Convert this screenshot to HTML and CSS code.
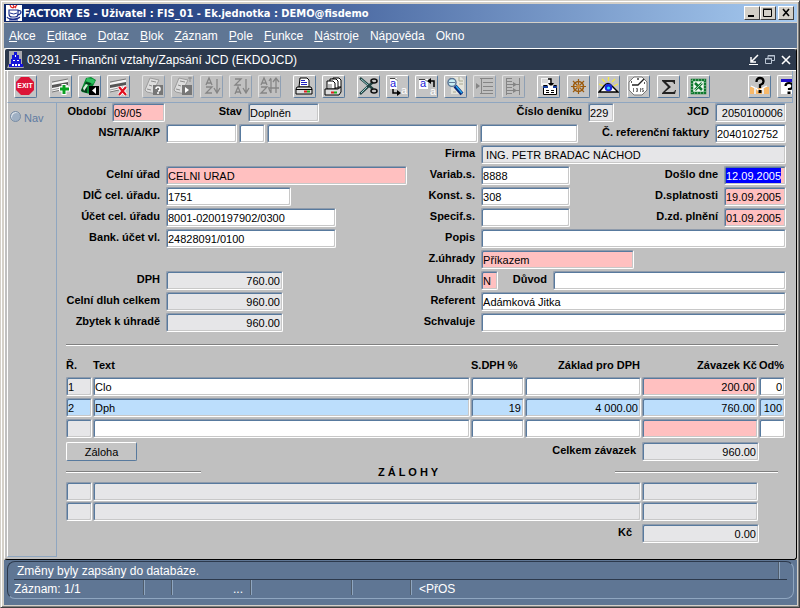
FILE: index.html
```html
<!DOCTYPE html>
<html lang="cs">
<head>
  <meta charset="UTF-8" />
  <meta name="viewport" content="width=device-width, initial-scale=1.0" />
  <title>FACTORY ES</title>
  <link rel="stylesheet" href="styles.css">
</head>
<body>
<div class="window">
  <header class="titlebar">
    <svg class="app-icon" viewBox="0 0 16 16" aria-hidden="true">
      <rect width="16" height="16" fill="#fff"/>
      <path d="M4 0l1 2 2 1M7 0l1 2-1 1M11 0l-2 2 1 1" fill="none" stroke="#e02020" stroke-width="1.200"/>
      <path d="M3 5h9v4q0 3-3 3H6q-3 0-3-3zM12 6q3-1 3 1t-3 3M1 12q1 2 6 2t7-2M3 15h9" fill="none" stroke="#1c2f8c" stroke-width="1.200"/>
      <path d="M4 8q4 2 7 0" fill="none" stroke="#1c2f8c"/>
    </svg>
    <h1>FACTORY ES - Uživatel : FIS_01 - Ek.jednotka : DEMO@fisdemo</h1>
    <div class="win-buttons">
      <button type="button" aria-label="Minimalizovat"><svg viewBox="0 0 14 12"><path d="M3 9h6" stroke="#000" stroke-width="2"/></svg></button>
      <button type="button" aria-label="Maximalizovat"><svg viewBox="0 0 14 12"><path d="M2.500 2.500h8v7h-8zM2 2h9" fill="none" stroke="#000"/></svg></button>
      <button type="button" class="close" aria-label="Zavřít"><svg viewBox="0 0 14 12"><path d="M4 2l6 7M10 2l-6 7" stroke="#000" stroke-width="1.600"/></svg></button>
    </div>
  </header>

  <nav class="menu">
    <a href="#"><u>A</u>kce</a>
    <a href="#"><u>E</u>ditace</a>
    <a href="#"><u>D</u>otaz</a>
    <a href="#"><u>B</u>lok</a>
    <a href="#"><u>Z</u>áznam</a>
    <a href="#"><u>P</u>ole</a>
    <a href="#"><u>F</u>unkce</a>
    <a href="#"><u>N</u>ástroje</a>
    <a href="#">Náp<u>o</u>věda</a>
    <a href="#">Okno</a>
  </nav>

  <div class="child">
    <div class="child-title">
      <svg class="child-icon" viewBox="0 0 18 18" aria-hidden="true">
        <path d="M2 0h13v13l2 4H0l2-4z" fill="#a9a9b0"/>
        <path d="M7 1h3v3h2v4h2v5h2v3H2v-3h2V8h1V4h2z" fill="#1414d8"/>
        <path d="M8 4h1v2H8zM6 9h2v1H6zM10 9h2v1h-2zM5 13h2v2H5zM8 13h2v2H8zM11 13h2v2h-2z" fill="#fff"/>
      </svg>
      <h2>03291 - Finanční vztahy/Zapsání JCD (EKDOJCD)</h2>
      <div class="child-buttons">
        <button type="button" aria-label="Minimalizovat okno"><svg viewBox="0 0 12 12"><path d="M10 1L4 7M3 3v5h5" fill="none" stroke="#fff" stroke-width="1.500"/><path d="M1 10.500h9" stroke="#fff"/></svg></button>
        <button type="button" aria-label="Obnovit okno"><svg viewBox="0 0 12 12"><path d="M4 4V1.500h6.500v5H8M1.500 4.500h6v5h-6z" fill="none" stroke="#b9c4d2"/><path d="M4 2h7M1 5h7" stroke="#b9c4d2"/></svg></button>
        <button type="button" aria-label="Zavřít okno"><svg viewBox="0 0 12 12"><path d="M2 2l8 8M10 2l-8 8" stroke="#fff" stroke-width="1.600"/></svg></button>
      </div>
    </div>

    <div class="toolbar">
      <button type="button" aria-label="Konec"><svg viewBox="0 0 21 21"><path d="M6 1h8l5 5v8l-5 5H6l-5-5V6z" fill="#dc1438"/><text class="exit" x="10" y="12" text-anchor="middle">EXIT</text></svg></button>

      <div class="group">
        <button type="button" aria-label="Nový záznam"><svg viewBox="0 0 21 21"><path d="M2 7l16-4v9L2 16z" fill="#f4f4f4"/><path d="M2 6l16-3M2 16l9-2" stroke="#777"/><path d="M2 9l16-3v3L2 12z" fill="#555"/><path d="M2 14l13-3" stroke="#999"/><path d="M14 8v11M9 13h11" stroke="#fff" stroke-width="5"/><path d="M14 9v9M10 13h9" stroke="#08a020" stroke-width="3"/></svg></button>
        <button type="button" aria-label="Uložit"><svg viewBox="0 0 21 21"><path d="M2 14L7 2l5-1 5 3-3 6-3 8-8-2z" fill="#0a8a32"/><path d="M8 2l6 1 2 2-2 3-7-3z" fill="#30c060"/><path d="M2 15l2-4 4-2v8M7 6l5 1-1 2-5-1z" fill="#053c18"/><path d="M4 12l3-4 2 1-4 6z" fill="#d8f0dc"/><path d="M10 10h10v9H10z"/><path d="M17 11v7l-4-3.500z" fill="#fff"/></svg></button>
        <button type="button" aria-label="Smazat záznam"><svg viewBox="0 0 21 21"><path d="M2 7l16-4v9L2 16z" fill="#f4f4f4"/><path d="M2 6l16-3M2 16l9-2" stroke="#777"/><path d="M2 9l16-3v3L2 12z" fill="#555"/><path d="M2 14l13-3" stroke="#999"/><path d="M11 11l7 8M18 11l-7 8" stroke="#fff" stroke-width="4"/><path d="M11 11l7 8M18 11l-7 8" stroke="#e01020" stroke-width="2.200"/></svg></button>
      </div>

      <div class="group">
        <button type="button" class="off" disabled aria-label="Zadat dotaz"><svg viewBox="0 0 21 21"><path d="M2 14L7 2l9 2-3 6v8l-9-2z" fill="#ddd" stroke="#9c9c9c"/><path d="M8 5l5 1M6 9l3 1M4 13l4 1" stroke="#8c8c8c"/><path d="M10 9h10v10H10z" fill="#777"/><path d="M13 13q0-2 2-2t2 2-2 2m0 1v2" fill="none" stroke="#fff" stroke-width="1.500"/></svg></button>
        <button type="button" class="off" disabled aria-label="Provést dotaz"><svg viewBox="0 0 21 21"><path d="M2 14L7 2l9 2-3 6v8l-9-2z" fill="#ddd" stroke="#9c9c9c"/><path d="M8 5l5 1M6 9l3 1M4 13l4 1M16 2h4M18 1v5" stroke="#8c8c8c"/><path d="M10 9h10v10H10z" fill="#777"/><path d="M13 11v6l4-3z" fill="#fff"/></svg></button>
        <button type="button" class="off" disabled aria-label="Řadit vzestupně"><svg viewBox="0 0 21 21"><path d="M5 9l3-7 3 7M6 7h4M5 11h6l-6 6h6M16 3v13M13 12l3 5 3-5" fill="none" stroke="#858585" stroke-width="1.300"/></svg></button>
        <button type="button" class="off" disabled aria-label="Řadit sestupně"><svg viewBox="0 0 21 21"><path d="M5 3h6l-6 6h6M5 18l3-7 3 7M6 16h4M16 3v13M13 12l3 5 3-5" fill="none" stroke="#858585" stroke-width="1.300"/></svg></button>
        <button type="button" class="off" disabled aria-label="Řadit"><svg viewBox="0 0 21 21"><path d="M2 9l3-7 3 7M3 7h4M2 11h6l-6 6h6M12 17V3M10 13l2 4M17 3v14M10 5l2-3M14 6l3-4 3 4M9 12h11" fill="none" stroke="#858585" stroke-width="1.300"/></svg></button>
      </div>

      <div class="group">
        <button type="button" aria-label="Tisk"><svg viewBox="0 0 21 21"><path d="M6 2h7l2 2v7H5z" fill="#fff" stroke="#000"/><path d="M7 4.500h4M7 6.500h6M7 8.500h6" stroke="#2020c0"/><path d="M3 11h14l1 2v5H2v-5z" fill="#ddd" stroke="#000"/><path d="M2 13.500h16" stroke="#000"/><path d="M10 15.500h3" stroke="#e02020" stroke-width="2"/><path d="M13 15.500h3" stroke="#20b020" stroke-width="2"/></svg></button>
        <button type="button" aria-label="Tisk sestav"><svg viewBox="0 0 21 21"><path d="M10 2h6l2 2v7h-8z" fill="#fff" stroke="#000"/><path d="M7 3h6l2 2v7H7z" fill="#fff" stroke="#000"/><path d="M4 5h6l2 2v6H4z" fill="#fff" stroke="#000"/><path d="M5 9h4M5 11h4" stroke="#777"/><path d="M2 13h13l3-2v5l-2 3H2z" fill="#ddd" stroke="#000"/><path d="M8 16.500h3" stroke="#e02020" stroke-width="2"/><path d="M11 16.500h3" stroke="#20b020" stroke-width="2"/></svg></button>
      </div>

      <div class="group">
        <button type="button" aria-label="Vyjmout"><svg viewBox="0 0 21 21"><path d="M2 2l13 11M2 18L15 6" stroke="#244" stroke-width="2.400"/><path d="M3 3l7 6M3 17l6-6" stroke="#9cc"/><ellipse cx="16" cy="5" rx="3" ry="2" fill="none" stroke="#111" stroke-width="1.600"/><ellipse cx="16" cy="15" rx="3" ry="2" fill="none" stroke="#111" stroke-width="1.600"/></svg></button>
        <button type="button" aria-label="Kopírovat"><svg viewBox="0 0 21 21"><path d="M3 2h7v11H3z" fill="#fff"/><path d="M3 2.500h5l2 2" fill="none" stroke="#444"/><text class="copy" x="3" y="11" fill="#2020d8">a</text><path d="M6 13v4h5" fill="none" stroke="#000" stroke-width="1.500"/><path d="M10 14l4 3-4 3z"/><text class="copy" x="14" y="18" fill="#fff">a</text></svg></button>
        <button type="button" aria-label="Vložit"><svg viewBox="0 0 21 21"><path d="M3 3h9v10H3z" fill="#fff"/><path d="M3 3.500h6l2 2" fill="none" stroke="#444"/><text class="copy" x="4" y="11" fill="#2020d8">a</text><path d="M13 5h5v6" fill="none" stroke="#000" stroke-width="1.500"/><path d="M15 2l-4 3 4 3z"/><text class="copy" x="14" y="19" fill="#fff">a</text></svg></button>
        <button type="button" aria-label="Hledat"><svg viewBox="0 0 21 21"><path d="M6 1h10l3 3v14H6z" fill="#e4e4dc"/><path d="M14 1v4h4M14 8h4M8 16h3" fill="none" stroke="#a8a890"/><circle cx="7" cy="6.500" r="4" fill="#c8eef4" stroke="#5d7897" stroke-width="1.500"/><path d="M4 6.500h6" stroke="#5d7897"/><path d="M10 10l7 8" stroke="#082878" stroke-width="4"/><path d="M11 10l6 7" stroke="#28a8f0" stroke-width="1.500"/></svg></button>
        <button type="button" class="off" disabled aria-label="Seznam"><svg viewBox="0 0 21 21"><path d="M6 2.500h13M9 6.500h10M9 10.500h10M9 14.500h10M6 17.500h13M7.500 2v16" stroke="#858585"/><path d="M2 7l4 3-4 3z" fill="#858585"/></svg></button>
        <button type="button" class="off" disabled aria-label="Strom"><svg viewBox="0 0 21 21"><path d="M3.500 2v17M3 2.500h6M3 5.500h6M3 8.500h6M3 11.500h6M3 14.500h6M3 17.500h6M16.500 2v17M9 8.500h7M9 14.500h7" stroke="#858585"/><path d="M10 6l4 2.500-4 2.500zM10 12l4 2.500-4 2.500z" fill="#858585"/></svg></button>
      </div>

      <div class="group wide">
        <button type="button" aria-label="Formulář"><svg viewBox="0 0 21 21"><path d="M3 2h9v8H3z" fill="#f4f4f4"/><path d="M4 4h6M4 6h6" stroke="#bbb"/><path d="M10 3h3v5" fill="none" stroke="#000" stroke-width="1.400"/><path d="M10 7h6l-3 4z"/><path d="M5.500 9.500v9h13v-9h-3M5.500 9.500h4" fill="#fff" stroke="#000"/><path d="M5 10h5v2H5zM15 10h4v2h-4z" fill="#123c9c"/><path d="M8 14.500h3M8 16.500h3M13 14.500h3M13 16.500h3" stroke="#000"/></svg></button>
        <button type="button" aria-label="Navigace"><svg viewBox="0 0 21 21"><circle cx="10.500" cy="10.500" r="5" fill="none" stroke="#9c5c10" stroke-width="1.600"/><path d="M10.500 3v15M3 10.500h15M5 5l11 11M16 5L5 16" stroke="#9c5c10" stroke-width="1.200"/><circle cx="10.500" cy="10.500" r="2" fill="#c88838"/></svg></button>
        <button type="button" aria-label="Zobrazit"><svg viewBox="0 0 21 21"><path d="M10.500 1v4M4 3l3 3M17 3l-3 3M1 8l4 2M20 8l-4 2" stroke="#f4e840" stroke-width="1.300"/><path d="M1 16q3-3 5-6 4-5 8 0 3 3 6 6z" fill="#fff" stroke="#000" stroke-width="1.400"/><circle cx="10.500" cy="11.500" r="3.800" fill="#1828e0"/><circle cx="10.500" cy="12" r="1.600" fill="#30d8f8"/></svg></button>
        <button type="button" aria-label="Hodiny"><svg viewBox="0 0 21 21"><path d="M6 1h8l5 5v8l-5 5H6l-5-5V6z" fill="#fff" stroke="#777"/><path d="M4 9h6l6-6M3 6h1M10 2v2M17 7h-1" fill="none" stroke="#222" stroke-width="1.300"/><path d="M5.500 12v4M8 12.500h1.500v3H8M9.500 14H8M12.500 12v4M15.500 12.500h-1.500v1.500h1.500v1.500h-1.500" fill="none" stroke="#555" stroke-width="0.800"/></svg></button>
        <button type="button" aria-label="Součet"><svg viewBox="0 0 21 21"><path d="M4 4h13v4h-1q0-2-2-2H8l5 5-6 5h8q2 0 2-2h1l-1 4H4v-1l6-6-6-6z" fill="#222"/></svg></button>
        <button type="button" aria-label="Excel"><svg viewBox="0 0 21 21"><path d="M4 4h13v13H4z" fill="#f4fcf4" stroke="#107830" stroke-width="2.500"/><path d="M4 4h13v13H4z" fill="none" stroke="#a0d0a8" stroke-dasharray="1 2"/><path d="M7 7l7 7M14 7l-7 7" stroke="#107830" stroke-width="2.500"/><path d="M14 7l-7 7" stroke="#fff" stroke-width="0.700"/></svg></button>
      </div>

      <div class="group last">
        <button type="button" aria-label="Nápověda"><svg viewBox="0 0 21 21"><path d="M1 11h4v7H1zM7 12h6v6H7zM15 11h5v7h-5z" fill="#f8b868"/><path d="M2 10l4 2v6M7 12l3 3 4-3M14 18v-6l4-2" fill="none" stroke="#fff" stroke-width="1.300"/><path d="M7.500 6q0-4 3.500-4t3.500 3.500Q14.500 8 11 9v3" fill="none" stroke="#000" stroke-width="2.300"/><path d="M9.500 14h3v3h-3z"/></svg></button>
        <button type="button" aria-label="O okně"><svg viewBox="0 0 21 21"><path d="M3 3h18v15H3z" fill="#fff"/><path d="M3 3h18v3H3z" fill="#2010c8"/><path d="M7.500 10q0-3 3.500-3t3.500 3-3.500 3v1" fill="none" stroke="#000" stroke-width="2.200"/><path d="M9.500 15.500h3v2.500h-3z"/></svg></button>
      </div>
    </div>

    <div class="work">
      <aside class="sidebar">
        <input type="radio" id="nav" disabled>
        <label for="nav">Nav</label>
      </aside>

      <main>
        <form class="form">
          <div class="row">
            <label class="short" for="obdobi">Období</label>
            <input class="req w-period" id="obdobi" value="09/05">
            <label class="w-state-label" for="stav">Stav</label>
            <input class="ro w-state" id="stav" value="Doplněn" readonly>
            <label class="grow" for="denik">Číslo deníku</label>
            <input class="ro w-small" id="denik" value="229" readonly>
            <label class="w-jcd-label" for="jcd">JCD</label>
            <input class="ro num w-number" id="jcd" value="2050100006" readonly>
          </div>
          <div class="row">
            <label class="left-label" for="ns">NS/TA/A/KP</label>
            <div class="parts">
              <input class="w-number" id="ns">
              <input class="w-small" aria-label="TA">
              <input class="grow" aria-label="A">
              <input class="w-kp" aria-label="KP">
            </div>
            <label class="w-ref-label" for="faktura">Č. referenční faktury</label>
            <input class="w-number" id="faktura" value="2040102752">
          </div>

          <div class="columns">
            <div class="col left">
              <div class="row blank"></div>
              <div class="row"><label for="urad">Celní úřad</label><input class="req grow" id="urad" value="CELNI URAD"></div>
              <div class="row"><label for="dic">DIČ cel. úřadu.</label><input class="w-dic" id="dic" value="1751"></div>
              <div class="row"><label for="ucet">Účet cel. úřadu</label><input class="w-account" id="ucet" value="8001-0200197902/0300"></div>
              <div class="row"><label for="banka">Bank. účet vl.</label><input class="w-account" id="banka" value="24828091/0100"></div>
              <div class="row blank"></div>
              <div class="row"><label for="dph">DPH</label><input class="ro num w-amount" id="dph" value="760.00" readonly></div>
              <div class="row"><label for="dluh">Celní dluh celkem</label><input class="ro num w-amount" id="dluh" value="960.00" readonly></div>
              <div class="row"><label for="zbytek">Zbytek k úhradě</label><input class="ro num w-amount" id="zbytek" value="960.00" readonly></div>
            </div>
            <div class="col right">
              <div class="row"><label for="firma">Firma</label><input class="ro grow" id="firma" value=" ING. PETR BRADAC NÁCHOD" readonly></div>
              <div class="row"><label for="vs">Variab.s.</label><input class="w-symbol" id="vs" value="8888"><label class="grow" for="doslo">Došlo dne</label><span class="req w-date field"><input class="selected" id="doslo" value="12.09.2005"></span></div>
              <div class="row"><label for="ks">Konst. s.</label><input class="w-symbol" id="ks" value="308"><label class="grow" for="splatnost">D.splatnosti</label><input class="req w-date" id="splatnost" value="19.09.2005"></div>
              <div class="row"><label for="ss">Specif.s.</label><input class="w-symbol" id="ss"><label class="grow" for="plneni">D.zd. plnění</label><input class="req w-date" id="plneni" value="01.09.2005"></div>
              <div class="row"><label for="popis">Popis</label><input class="grow" id="popis"></div>
              <div class="row"><label for="zuhrady">Z.úhrady</label><input class="req w-pay" id="zuhrady" value="Příkazem"></div>
              <div class="row"><label for="uhradit">Uhradit</label><input class="req w-flag" id="uhradit" value="N"><label class="w-reason-label" for="duvod">Důvod</label><input class="grow" id="duvod"></div>
              <div class="row"><label for="referent">Referent</label><input class="grow" id="referent" value="Adámková Jitka"></div>
              <div class="row"><label for="schvaluje">Schvaluje</label><input class="grow" id="schvaluje"></div>
            </div>
          </div>

          <hr class="divider">

          <table class="items">
            <colgroup><col class="c-no"><col><col class="c-rate"><col class="c-sum"><col class="c-sum"><col class="c-no"></colgroup>
            <thead>
              <tr><th>Ř.</th><th>Text</th><th class="rate">S.DPH %</th><th class="num">Základ pro DPH</th><th class="num">Závazek Kč</th><th class="num">Od%</th></tr>
            </thead>
            <tbody>
              <tr>
                <td><input class="ro" aria-label="Řádek" value="1" readonly></td>
                <td><input aria-label="Text" value="Clo"></td>
                <td><input class="num" aria-label="Sazba DPH"></td>
                <td><input class="num" aria-label="Základ pro DPH"></td>
                <td><input class="num req" aria-label="Závazek Kč" value="200.00"></td>
                <td><input class="num" aria-label="Od%" value="0"></td>
              </tr>
              <tr class="current">
                <td><input aria-label="Řádek" value="2" readonly></td>
                <td><input aria-label="Text" value="Dph"></td>
                <td><input class="num" aria-label="Sazba DPH" value="19"></td>
                <td><input class="num" aria-label="Základ pro DPH" value="4 000.00"></td>
                <td><input class="num" aria-label="Závazek Kč" value="760.00"></td>
                <td><input class="num" aria-label="Od%" value="100"></td>
              </tr>
              <tr>
                <td><input class="ro" aria-label="Řádek" readonly></td>
                <td><input aria-label="Text"></td>
                <td><input class="num" aria-label="Sazba DPH"></td>
                <td><input class="num" aria-label="Základ pro DPH"></td>
                <td><input class="num req" aria-label="Závazek Kč"></td>
                <td><input class="num" aria-label="Od%"></td>
              </tr>
            </tbody>
          </table>

          <div class="row total">
            <button type="button" class="btn">Záloha</button>
            <label class="grow" for="celkem">Celkem závazek</label>
            <input class="ro num w-amount" id="celkem" value="960.00" readonly>
          </div>

          <div class="section">
            <hr>
            <h3>Z Á L O H Y</h3>
            <hr class="long">
          </div>

          <table class="items advances">
            <colgroup><col class="c-no"><col><col class="c-sum"></colgroup>
            <tbody>
              <tr>
                <td><input class="ro" aria-label="Číslo zálohy" readonly></td>
                <td><input class="ro" aria-label="Text zálohy" readonly></td>
                <td><input class="ro num" aria-label="Částka zálohy" readonly></td>
              </tr>
              <tr>
                <td><input class="ro" aria-label="Číslo zálohy" readonly></td>
                <td><input class="ro" aria-label="Text zálohy" readonly></td>
                <td><input class="ro num" aria-label="Částka zálohy" readonly></td>
              </tr>
            </tbody>
          </table>

          <div class="row total kc">
            <label class="grow" for="kc">Kč</label>
            <input class="ro num w-amount" id="kc" value="0.00" readonly>
          </div>
        </form>
      </main>
    </div>
  </div>

  <footer class="status">
    <div class="status-box">
      <div class="status-row message"><span>Změny byly zapsány do databáze.</span></div>
      <div class="status-row">
        <span class="s-record">Záznam: 1/1</span>
        <span class="s-flag"></span>
        <span class="s-list">...</span>
        <span class="s-mode"></span>
        <span class="s-gap"></span>
        <span class="s-osc">&lt;PřOS</span>
      </div>
    </div>
  </footer>
</div>
</body>
</html>
```
FILE: styles.css
```css
:root {
  --face: #c0c0c0;
  --menu: #5f7694;
  --dark: #2c394c;
  --edge: #587a9e;
  --required: #ffc0c0;
  --readonly: #e6e6e8;
  --current: #bcdefc;
}

* {
  box-sizing: border-box;
}

body {
  margin: 0;
  font-family: "Liberation Sans", Arial, sans-serif;
  font-size: 11px;
  color: #000;
}

h1, h2, h3 {
  margin: 0;
  font-size: 12px;
  white-space: nowrap;
}

button {
  padding: 0;
  font: inherit;
}

.window {
  display: flex;
  flex-direction: column;
  min-height: 100vh;
  padding: 2px;
  border: 1px solid;
  border-color: #d4d0c8 #404040 #404040 #d4d0c8;
  box-shadow: inset 1px 1px #fff, inset -1px -1px #808080;
  background: #d4d0c8;
}

/* title bar */
.titlebar {
  display: flex;
  align-items: center;
  gap: 1px;
  height: 20px;
  margin-left: 1px;
  padding: 0 3px 0 2px;
  border-top: 1px solid #d4d0c8;
  border-bottom: 1px solid #d4d0c8;
  background: linear-gradient(to right, #0a246a, #a6caf0);
  color: #fff;
}

.titlebar h1 {
  font-size: 11px;
  font-family: "DejaVu Sans Condensed", "Liberation Sans", sans-serif;
}

.app-icon {
  width: 16px;
  height: 16px;
}

.win-buttons {
  display: flex;
  margin-left: auto;
}

.win-buttons button {
  width: 16px;
  height: 14px;
  border: 1px solid;
  border-color: #fff #404040 #404040 #fff;
  background: #d4d0c8;
}

.win-buttons .close {
  margin-left: 2px;
}

.win-buttons svg,
.child-buttons svg,
.toolbar svg {
  display: block;
  width: 100%;
  height: 100%;
}

/* menu */
.menu {
  display: flex;
  align-items: center;
  gap: 11px;
  height: 25px;
  margin-left: 1px;
  padding: 0 5px;
  background: var(--menu);
  font-size: 12px;
}

.menu a {
  color: #fff;
  text-decoration: none;
}

/* form window */
.child {
  flex: 1;
  display: flex;
  flex-direction: column;
  margin-left: 1px;
  border: 1px solid #fff;
  border-right-color: #000;
  border-bottom-color: #000;
  border-radius: 3px;
  background: var(--face);
  overflow: hidden;
}

.child-title {
  display: flex;
  align-items: center;
  gap: 2px;
  height: 22px;
  padding: 0 4px 0 2px;
  border-bottom: 1px solid #fff;
  background: var(--dark);
  color: #fff;
}

.child-title h2 {
  font-weight: normal;
}

.child-icon {
  width: 18px;
  height: 18px;
}

.child-buttons {
  display: flex;
  gap: 4px;
  margin-left: auto;
}

.child-buttons button {
  width: 12px;
  height: 12px;
  border: none;
  background: none;
}

.toolbar {
  display: flex;
  align-items: center;
  gap: 12px;
  height: 32px;
  margin: 0 3px 0 2px;
  padding-left: 6px;
  border: 1px solid #8fa6c0;
  border-left-color: #fff;
  border-top: none;
  overflow: hidden;
}

.toolbar button {
  flex: none;
  width: 23px;
  height: 23px;
  border: 1px solid;
  border-color: #fff #587a9e #587a9e #fff;
  border-radius: 2px;
  background: #c4c4c4;
}

.toolbar .off {
  border-color: #e4e4e4 #8fa0b4 #8fa0b4 #e4e4e4;
  background: var(--face);
}

.toolbar .group {
  flex: none;
  display: flex;
  gap: 6px;
}

.toolbar .wide {
  gap: 7px;
}

.toolbar .last {
  margin-left: auto;
  margin-right: -8px;
}

.exit {
  font-size: 7px;
  font-weight: bold;
  fill: #fff;
}

.copy {
  font-size: 11px;
}

.work {
  flex: 1;
  display: flex;
}

.sidebar {
  width: 50px;
  margin: 0 0 2px 2px;
  padding: 8px 0 0 2px;
  border: 1px solid #8fa6c0;
  border-left-color: #fff;
  border-top: none;
  color: #5f7ba2;
  white-space: nowrap;
}

.sidebar input {
  appearance: none;
  width: 11px;
  height: 11px;
  margin: 0;
  border: 1px solid #788ca4;
  border-radius: 50%;
  background: #9fb0c4;
  box-shadow: inset 1px 1px #dde3ea;
}

main {
  flex: 1;
  min-width: 0;
  padding: 0 10px 8px 9px;
}

/* form rows */
.form,
.col {
  display: flex;
  flex-direction: column;
  gap: 2px;
}

.row {
  display: flex;
  gap: 6px;
  height: 19px;
}

.row label {
  flex: none;
  font-weight: bold;
  line-height: 17px;
  text-align: right;
  white-space: nowrap;
}

.form input,
.field {
  width: 100%;
  min-width: 0;
  height: 19px;
  margin: 0;
  padding: 1px 2px 0 1px;
  border: 1px solid #fff;
  border-top-color: #8f9bab;
  border-left-color: #8f9bab;
  border-radius: 2px;
  box-shadow: inset 1px 1px var(--edge), inset -1px -1px #c8c8c8;
  background: #fff;
  font: inherit;
  color: #000;
}

.row input,
.field {
  flex: none;
}

.form .req {
  background: var(--required);
}

.form .ro {
  background: var(--readonly);
}

.form .num {
  text-align: right;
}

.field {
  display: flex;
  padding: 1px 4px 1px 1px;
}

.form .field .selected {
  flex: 1;
  height: 15px;
  padding: 0;
  border: none;
  border-radius: 0;
  box-shadow: none;
  background: #0000ff;
  color: #fff;
}

.columns {
  display: grid;
  grid-template-columns: 9fr 10fr;
}

.left-label,
.left .row label {
  width: 94px;
}

.right .row label:first-child {
  width: 68px;
}

.parts {
  flex: 1;
  display: flex;
  gap: 2px;
  min-width: 0;
}

.row .short { width: 40px; }
.row .w-state-label { width: 71px; }
.row .w-jcd-label { width: 89px; }
.row .w-ref-label { width: 125px; }
.row .w-reason-label { width: 43px; }
.row .w-period { width: 53px; }
.row .w-state { width: 71px; }
.row .w-small { width: 26px; }
.row .w-number { width: 71px; }
.row .w-kp { width: 98px; }
.row .w-dic { width: 125px; }
.row .w-account { width: 170px; }
.row .w-amount { width: 117px; }
.row .w-symbol { width: 89px; }
.row .w-date { width: 62px; }
.row .w-pay { width: 153px; }
.row .w-flag { width: 17px; }

.row .grow {
  flex: 1;
  width: auto;
}

/* lines */
hr {
  height: 2px;
  margin: 0;
  border: none;
  border-top: 1px solid #808080;
  border-bottom: 1px solid #fff;
}

.divider {
  margin: 10px 8px 9px 0;
}

.section {
  display: flex;
  align-items: center;
  justify-content: space-between;
  height: 17px;
}

.section h3 {
  font-size: 11px;
}

.section hr {
  width: 135px;
}

.section .long {
  width: 163px;
  margin-right: 8px;
}

/* record tables */
.items {
  width: 100%;
  table-layout: fixed;
  border-collapse: collapse;
}

.items th {
  height: 20px;
  padding: 0;
  text-align: left;
  vertical-align: top;
  line-height: 16px;
  white-space: nowrap;
}

.items .rate {
  padding-right: 12px;
  text-align: right;
}

.items .num {
  text-align: right;
}

.items th.num {
  padding-right: 2px;
}

.items td {
  height: 21px;
  padding: 0 1px 2px 0;
}

.items td input {
  display: block;
}

.c-no { width: 27px; }
.c-rate { width: 54px; }
.c-sum { width: 117px; }

.form .current input {
  background: var(--current);
}

.total {
  padding-right: 27px;
}

.btn {
  width: 71px;
  height: 19px;
  border: 1px solid;
  border-color: #fff var(--edge) var(--edge) #fff;
  border-radius: 2px;
  background: #c4c4c4;
}

.items.advances {
  width: calc(100% - 27px);
}

.advances td {
  height: 20px;
  padding-bottom: 1px;
}

.kc label {
  padding-right: 4px;
}

/* status bar */
.status {
  margin-left: 1px;
  padding: 1px 3px 6px;
  background: var(--menu);
  color: #fff;
  font-size: 12px;
}

.status-box {
  border: 1px solid #8fa6c0;
  border-top-color: var(--dark);
  border-left-color: var(--dark);
  border-radius: 8px;
}

.status-row {
  display: flex;
  height: 18px;
  margin: 0 6px;
  line-height: 18px;
}

.status-row span {
  margin-bottom: 3px;
  border-right: 2px groove #8fa6c0;
}

.message {
  border-bottom: 1px solid var(--dark);
  padding-right: 7px;
}

.message span {
  flex: 1;
  margin: 0;
  padding-left: 3px;
}

.s-record { width: 131px; }
.s-flag { width: 28px; }
.s-list {
  width: 79px;
  padding-right: 7px;
  text-align: right;
}
.s-mode { width: 101px; }
.s-gap { width: 59px; }

.status-row .s-osc {
  padding-left: 7px;
  border: none;
}
```
